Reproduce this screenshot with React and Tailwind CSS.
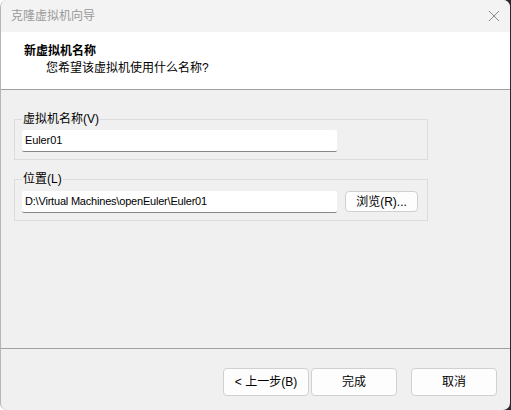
import React from "react";

function Btn({ children, className = "" }) {
  return (
    <button
      className={`h-[28px] w-[86px] rounded-[4px] border border-[#d0d0d0] bg-[#fdfdfd] text-[12px] text-black flex items-center justify-center ${className}`}
    >
      {children}
    </button>
  );
}

export default function App() {
  return (
    <div className="w-[511px] h-[410px] bg-[linear-gradient(to_right,#ffffff_246px,#2b2b2b_246px)] font-['Liberation_Sans','Noto_Sans_CJK_SC',sans-serif]">
      <div className="w-[510px] h-[410px] flex flex-col bg-[#f0f0f0] border-l border-[#b5b5b5] rounded-[7px] overflow-hidden">
        <div className="h-[32px] shrink-0 bg-[#f3f3f3] flex items-center justify-between pl-[10px] pr-[9px]">
          <span className="text-[12px] text-[#9a9a9a]">克隆虚拟机向导</span>
          <svg width="12" height="12" viewBox="0 0 12 12" className="mr-[1px]">
            <path d="M1 1L11 11M11 1L1 11" stroke="#8a8a8a" strokeWidth="1" fill="none" />
          </svg>
        </div>
        <div className="h-[58px] shrink-0 bg-white border-b border-[#a0a0a0] pl-[23px] pt-[11px]">
          <div className="text-[12px] font-bold text-black leading-[17px]">新虚拟机名称</div>
          <div className="text-[12px] text-black leading-[17px] pl-[22px]">您希望该虚拟机使用什么名称?</div>
        </div>
        <div className="flex-1 flex flex-col pl-[13px] pt-[29px] gap-[19px]">
          <div className="relative w-[414px] h-[41px] border border-[#dcdcdc] pl-[7px] pt-[10px]">
            <span className="absolute left-[7px] top-[-10px] bg-[#f0f0f0] px-[1px] text-[12px] leading-[18px] text-black">
              虚拟机名称(V)
            </span>
            <div className="w-[315px] h-[22px] bg-white border-b border-[#868686] rounded-[2px] flex items-center pl-[3px] text-[11px] tracking-[-0.1px] text-black">
              Euler01
            </div>
          </div>
          <div className="relative w-[414px] h-[42px] border border-[#dcdcdc] pl-[7px] pt-[11px] flex gap-[8px]">
            <span className="absolute left-[7px] top-[-10px] bg-[#f0f0f0] px-[1px] text-[12px] leading-[18px] text-black">
              位置(L)
            </span>
            <div className="w-[315px] h-[22px] bg-white border-b border-[#868686] rounded-[2px] flex items-center pl-[3px] text-[11px] tracking-[-0.2px] text-black">
              D:\Virtual Machines\openEuler\Euler01
            </div>
            <button className="w-[73px] h-[21px] rounded-[4px] border border-[#d0d0d0] bg-[#fdfdfd] text-[12px] text-black flex items-center justify-center">
              浏览(R)...
            </button>
          </div>
        </div>
        <div className="h-[62px] shrink-0 border-t border-[#a0a0a0] flex pt-[19px] pl-[222px]">
          <Btn>&lt; 上一步(B)</Btn>
          <Btn className="ml-[2px]">完成</Btn>
          <Btn className="ml-[14px]">取消</Btn>
        </div>
      </div>
    </div>
  );
}
